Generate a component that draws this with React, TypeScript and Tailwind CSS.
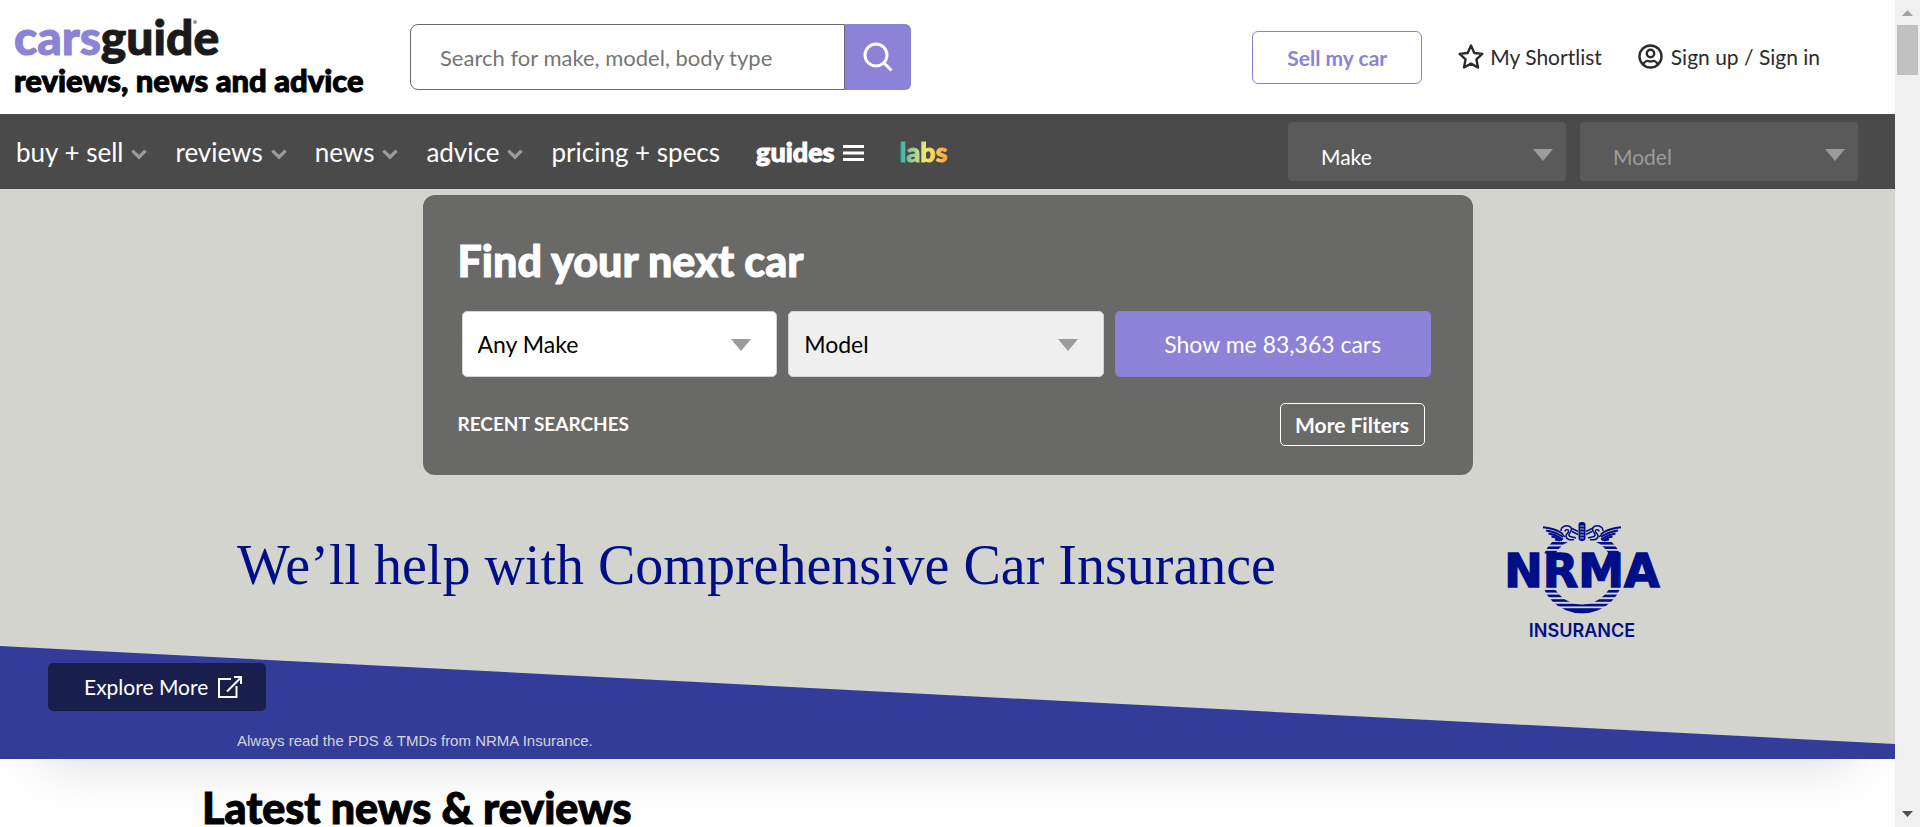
import type { ReactNode } from "react";

function Chevron() {
  return (
    <svg viewBox="0 0 16 11" className="mt-1 h-[11px] w-4" fill="none" stroke="#9b9b9b" strokeWidth="3.4" aria-hidden="true">
      <path d="M1.4 1.6 8 8.2l6.6-6.6" />
    </svg>
  );
}

function Caret({ className }: { className: string }) {
  return (
    <svg viewBox="0 0 20 12" className={`pointer-events-none absolute h-3 w-5 ${className}`} aria-hidden="true">
      <path d="M0 0h20L10 12z" fill="#9b9b9b" />
    </svg>
  );
}

function NavItem({ children, menu = false }: { children: ReactNode; menu?: boolean }) {
  return (
    <a href="#" className="flex items-center gap-2">
      {children}
      {menu && <Chevron />}
    </a>
  );
}

function NavSelect({ label, muted = false }: { label: string; muted?: boolean }) {
  return (
    <div className="relative w-[278px]">
      <select
        aria-label={label}
        className={`h-[59px] w-full appearance-none rounded-sm bg-[#5a5a5a] pt-[10px] pl-[33px] text-[21px] ${muted ? "text-[#9b9b9b]" : "text-white"}`}
      >
        <option>{label}</option>
      </select>
      <Caret className="top-[27px] right-[13px]" />
    </div>
  );
}

function SearchSelect({ label, className }: { label: string; className: string }) {
  return (
    <div className="relative flex-1">
      <select
        aria-label={label}
        className={`h-[66px] w-full appearance-none rounded-[5px] border border-[#d3d3d3] pl-[15px] text-[23px] text-black ${className}`}
      >
        <option>{label}</option>
      </select>
      <Caret className="top-7 right-[26px]" />
    </div>
  );
}

const ringStripes = [20, 24.4, 28.8, 68, 72.6, 77.2, 81.8];

function NrmaLogo() {
  const wing = (
    <g fill="none" stroke="#000f87" strokeWidth="2">
      <path d="M42 5.200c6 .8 11 1.500 16 4.300l4 2.500" />
      <path d="M45 8.400c5 .8 9 1.800 13 4.100l4 2.500" />
      <path d="M47.500 11.500c4 .8 7 1.600 10.500 3.500l4 2.500" />
      <path d="M50.500 14.600c3 .5 5 1.200 8 2.700l2.500 1" />
      <path d="M54 17.600l5 .8" />
      <path d="M60 9c0-5 7-7 10-3.500 2.500 4-3 5-2 8 .5 2 4 1 7 2.500" strokeWidth="1.500" />
      <path d="M64 9.500c0-2.500 4-2.500 3.500 0-.5 2-3 2.500-2.500 5s3 4 8 3" strokeWidth="1.500" />
      <path d="M71 6.500l6 3M71 9.500l6 3M61 12l3 3" strokeWidth="1.500" />
    </g>
  );
  return (
    <svg viewBox="0 0 162 118" className="h-[118px] w-[162px] shrink-0 overflow-visible" role="img" aria-label="NRMA Insurance">
      <defs>
        <clipPath id="ring">
          <path clipRule="evenodd" d="M39 49.500a42 42 0 1 0 84 0a42 42 0 1 0-84 0zM49 49.500a32 33 0 1 0 64 0a32 33 0 1 0-64 0z" />
        </clipPath>
      </defs>
      {wing}
      <g transform="translate(162 0) scale(-1 1)">{wing}</g>
      <rect x="77.500" y="0" width="7" height="19" rx="3" fill="#000f87" />
      <path d="M79 4h4M79 7h4M79 10h4M79 13h4M79 16h4" stroke="#d4d4cf" strokeWidth=".8" />
      <g clipPath="url(#ring)" fill="#000f87">
        {ringStripes.map((y) => (
          <rect key={y} x="35" y={y} width="92" height="2.600" />
        ))}
        <rect x="35" y="86.200" width="92" height="5.500" />
      </g>
      <text x="81" y="65" textAnchor="middle" fontFamily="DejaVu Sans, sans-serif" fontWeight="700" fontSize="46" fill="#000f87" stroke="#000f87" strokeWidth="1.500">
        NRMA
      </text>
      <text x="81" y="115" textAnchor="middle" fontFamily="Inter, sans-serif" fontWeight="600" fontSize="18" fill="#000f87">
        INSURANCE
      </text>
    </svg>
  );
}

function Header() {
  return (
    <header className="flex h-[114px] items-start bg-white pr-[75px] pl-[14px]">
      <a href="#" className="w-[396px] pt-[15px] font-black whitespace-nowrap [-webkit-text-stroke:1px_currentColor]">
        <span className="block text-[48px] leading-[44px] text-[#1a1a1a]">
          <span className="text-[#8c82d7]">cars</span>guid
          <span className="relative">
            e<span className="absolute top-3 left-0 size-1 rounded-full bg-[#999999]" />
          </span>
        </span>
        <span className="block text-[31px] leading-[42px] text-black">reviews, news and advice</span>
      </a>
      <form className="mt-6 flex h-[66px]" onSubmit={(e) => e.preventDefault()}>
        <input
          type="search"
          aria-label="Search"
          placeholder="Search for make, model, body type"
          className="w-[435px] rounded-l-lg border border-[#6a6578] pl-[29px] text-[22px] placeholder:text-[#757575]"
        />
        <button type="submit" aria-label="Search" className="flex w-[66px] items-center justify-center rounded-r-md bg-[#8c82d7]">
          <svg viewBox="0 0 30 30" className="size-[30px]" fill="none" stroke="white" strokeWidth="3" aria-hidden="true">
            <circle cx="13" cy="13" r="11" />
            <path d="m20.500 20.500 8 8" />
          </svg>
        </button>
      </form>
      <div className="mt-[31px] ml-auto flex h-[53px] items-center text-[21px] text-[#2b2b2b]">
        <button className="h-full w-[170px] rounded-md border border-[#8c82d7] font-bold text-[#8c82d7]">Sell my car</button>
        <a href="#" className="ml-9 flex items-center gap-[6px] pb-[2px]">
          <svg viewBox="0 0 26 25" className="h-[25px] w-[26px]" fill="none" stroke="currentColor" strokeWidth="2.400" strokeLinejoin="round" aria-hidden="true">
            <path d="m13 1.500 3.300 7.500 8 .9-5.900 5.400 1.600 8.200-7-3.900-7 3.900 1.600-8.200L1.700 9.900l8-.9z" />
          </svg>
          My Shortlist
        </a>
        <a href="#" className="ml-9 flex items-center gap-2 pb-[2px]">
          <svg viewBox="0 0 25 25" className="size-[25px]" fill="none" stroke="currentColor" strokeWidth="2.400" aria-hidden="true">
            <circle cx="12.500" cy="12.500" r="11" />
            <circle cx="12.500" cy="9.500" r="3.700" />
            <path d="M5.300 20.300c1.200-3 3.700-3.500 4.700-3.300 1.500.6 3.500.6 5 0 1-.2 3.500.3 4.700 3.300" />
          </svg>
          Sign up / Sign in
        </a>
      </div>
    </header>
  );
}

function NavBar() {
  return (
    <nav className="flex h-[75px] items-center bg-[#4a4a4a] pr-[37px] pl-4 text-[26px] whitespace-nowrap text-white">
      <div className="flex items-center gap-7 pt-[2px]">
        <NavItem menu>buy + sell</NavItem>
        <NavItem menu>reviews</NavItem>
        <NavItem menu>news</NavItem>
        <NavItem menu>advice</NavItem>
        <NavItem>pricing + specs</NavItem>
      </div>
      <div className="ml-9 flex items-center gap-9 pt-[2px] text-[27px]">
        <a href="#" className="flex items-center gap-2 font-black [-webkit-text-stroke:1px_currentColor]">
          guides
          <svg viewBox="0 0 21 16" className="h-4 w-[21px]" stroke="white" strokeWidth="3" aria-hidden="true">
            <path d="M0 1.500h21M0 8h21M0 14.500h21" />
          </svg>
        </a>
        <a href="#" className="bg-linear-to-r from-[#12b5b0] via-[#f5e96b] via-55% to-[#f9a23b] bg-clip-text font-black text-transparent [-webkit-text-stroke:1px_transparent]">
          labs
        </a>
      </div>
      <div className="ml-auto flex gap-[14px]">
        <NavSelect label="Make" />
        <NavSelect label="Model" muted />
      </div>
    </nav>
  );
}

function FinderPanel() {
  return (
    <section className="mx-auto h-[280px] w-full max-w-[1050px] rounded-xl bg-[#696967] px-[35px] pt-[41px] text-white">
      <h1 className="text-[43px] leading-[50px] font-black [-webkit-text-stroke:1px_currentColor]">Find your next car</h1>
      <div className="mt-[25px] flex gap-[11px] pr-[7px] pl-1">
        <SearchSelect label="Any Make" className="bg-white" />
        <SearchSelect label="Model" className="bg-[#efefef]" />
        <button className="h-[66px] flex-1 rounded-[5px] bg-[#8c82d7] text-[23px]">Show me 83,363 cars</button>
      </div>
      <div className="mt-[26px] flex items-center justify-between pr-[13px]">
        <h2 className="text-[19px] font-bold">RECENT SEARCHES</h2>
        <button className="h-[43px] w-[145px] rounded-[5px] border border-white text-[21px] font-bold">More Filters</button>
      </div>
    </section>
  );
}

function Hero() {
  return (
    <div className="relative h-[570px] bg-[#d4d4cf] pt-[6px] shadow-[0_40px_60px_-40px_rgba(0,0,0,0.16)]">
      <svg viewBox="0 0 100 114" preserveAspectRatio="none" className="absolute inset-x-0 bottom-0 h-[114px] w-full" aria-hidden="true">
        <path d="M0 1 100 99v15H0z" fill="#333d99" />
      </svg>
      <FinderPanel />
      <div className="flex items-start justify-between gap-8 pr-[232px] pl-[237px] pt-[47px] text-[#000f87]">
        <p className="pt-[11px] font-[Liberation_Serif,serif] text-[56px] leading-[64px]">
          We’ll help with Comprehensive Car Insurance
        </p>
        <NrmaLogo />
      </div>
      <div className="relative pt-[23px] pl-12">
        <a href="#" className="flex h-12 w-[218px] items-center gap-[10px] rounded-[5px] bg-[#181f4d] pl-9 text-[21px] text-white">
          Explore More
          <svg viewBox="0 0 24 22" className="h-[22px] w-6" fill="none" stroke="white" strokeWidth="2" aria-hidden="true">
            <path d="M13 3H1v18h17.500V10M9 15.500 22 2.500M16 1h7v7" />
          </svg>
        </a>
        <p className="mt-5 ml-[189px] font-[Liberation_Sans,sans-serif] text-[15px] leading-5 text-[#d4d4dc]">
          Always read the PDS &amp; TMDs from NRMA Insurance.
        </p>
      </div>
    </div>
  );
}

function ScrollRail() {
  return (
    <div className="flex w-[25px] shrink-0 flex-col items-center justify-between bg-[#f0f0f0]" aria-hidden="true">
      <div className="flex flex-col items-center">
        <svg viewBox="0 0 11 6" className="mt-[10px] h-[6px] w-[11px]">
          <path d="M0 6h11L5.500 0z" fill="#a3a3a3" />
        </svg>
        <div className="mt-[9px] h-[50px] w-[21px] bg-[#c1c1c1]" />
      </div>
      <svg viewBox="0 0 11 6" className="mb-[10px] h-[6px] w-[11px]">
        <path d="M0 0h11L5.500 6z" fill="#505050" />
      </svg>
    </div>
  );
}

export default function App() {
  return (
    <div className="flex h-screen overflow-hidden bg-white font-[Lato,sans-serif]">
      <div className="min-w-0 flex-1 overflow-hidden">
        <Header />
        <NavBar />
        <Hero />
        <h2 className="relative pt-6 pl-[202px] text-[43px] leading-[50px] font-black text-black [-webkit-text-stroke:1px_currentColor]">
          Latest news &amp; reviews
        </h2>
      </div>
      <ScrollRail />
    </div>
  );
}
